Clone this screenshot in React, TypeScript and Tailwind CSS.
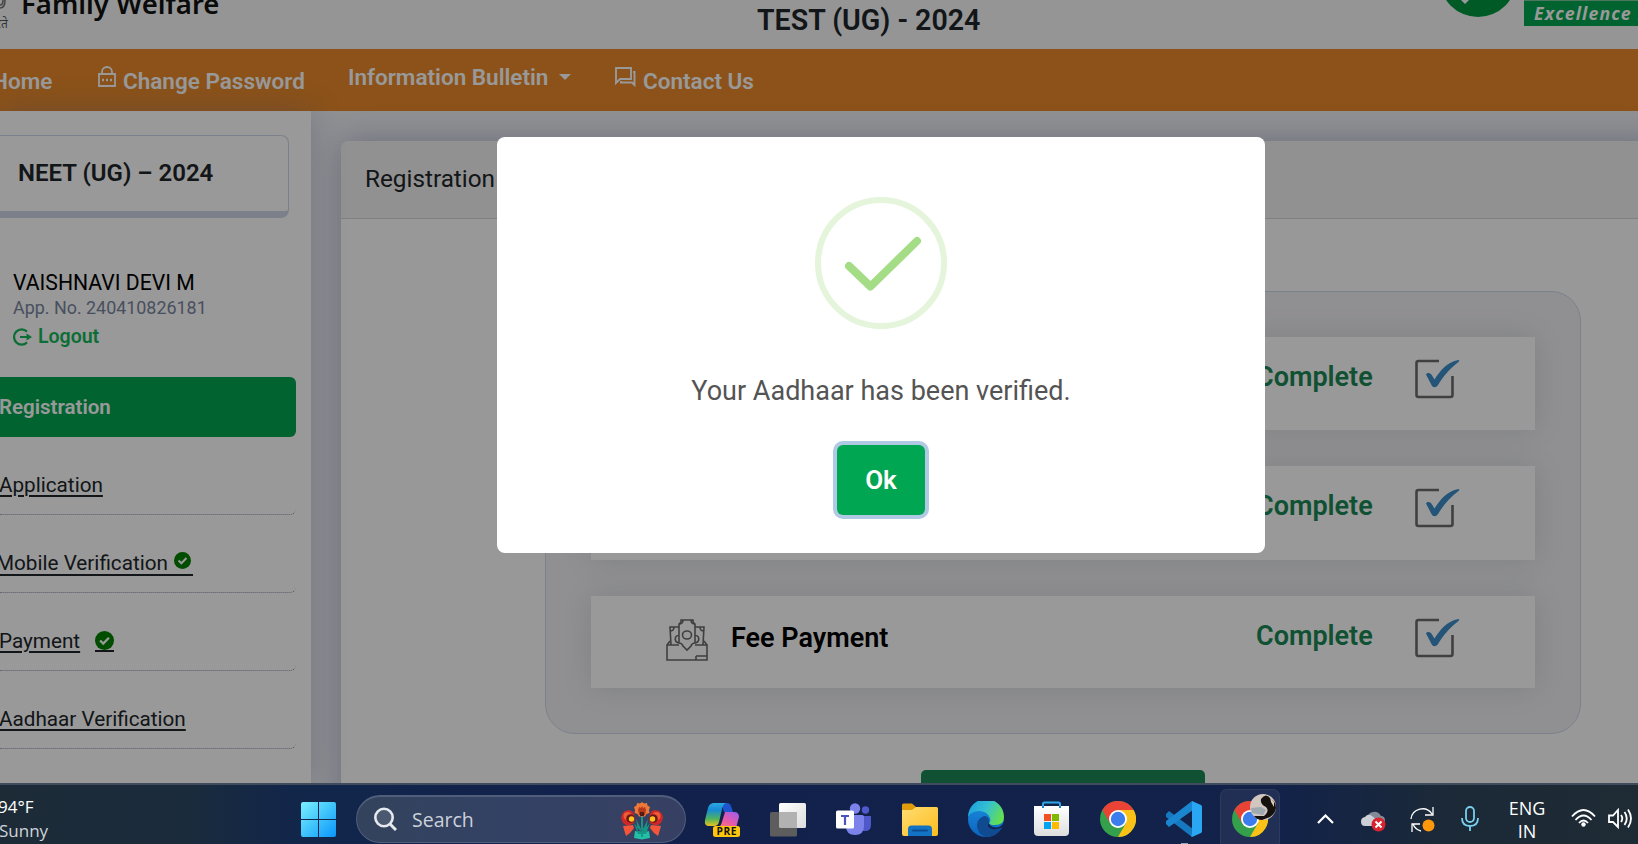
import React from "react";

const roboto = "font-['Roboto','Liberation_Sans',sans-serif]";
const segoe = "font-['Open_Sans','Noto_Sans',sans-serif]";

function Header() {
  return (
    <header className="flex h-[49px] shrink-0 items-start bg-[#f8f9fa]">
      <div className="relative h-full w-[757px] overflow-hidden">
        <svg className="absolute left-0 top-0" width="8" height="12" viewBox="0 0 8 12">
          <path d="M0 8C3 8 5 5 5 0M0 5c2 0 3-2 3-5" stroke="#777" strokeWidth="1.6" fill="none" />
        </svg>
        <span className="absolute left-[-4px] top-[16px] font-['Noto_Sans_Devanagari','Noto_Sans',sans-serif] text-[12px] leading-[18px] text-[#555]">रते</span>
        <span className="absolute left-[21px] top-[-16px] whitespace-nowrap font-['Noto_Sans',sans-serif] text-[27.500px] font-semibold leading-[40px] text-[#111]">Family Welfare</span>
      </div>
      <h1 className="mt-[0px] w-[689px] whitespace-nowrap text-[28.600px] font-semibold leading-[40px] text-[#212529]">TEST (UG) - 2024</h1>
      <svg width="78" height="20" viewBox="0 0 78 20">
        <circle cx="32" cy="-21.5" r="38.5" fill="#009640" />
        <path d="M13-2L19 4L25-2Z" fill="#fff" />
      </svg>
      <div className="flex h-[26px] w-[114px] items-start overflow-hidden border-t border-[#7cc79c] bg-[#00a650] pl-[10px]">
        <span className="whitespace-nowrap font-['Open_Sans',sans-serif] text-[17.700px] font-bold italic leading-[25px] tracking-[1.100px] text-white">Excellence in</span>
      </div>
    </header>
  );
}

function Nav() {
  return (
    <nav className="flex h-[62px] shrink-0 items-start overflow-hidden whitespace-nowrap bg-[#e9892a] text-[22.500px] font-semibold leading-[40px] text-white">
      <span className="ml-[-8px] mt-[12px] w-[106px]">Home</span>
      <svg className="mt-[17px]" width="18" height="22" viewBox="0 0 18 22" fill="none" stroke="#fff" strokeWidth="1.8">
        <path d="M1 8h16v12H1zM4 8V6a5 5 0 0 1 10 0v2" />
        <path d="M4 14h2M8 14h2M12 14h2" strokeWidth="2.4" />
      </svg>
      <span className="ml-[7px] mt-[12px] w-[225px]">Change Password</span>
      <span className="mt-[8px] w-[211px]">Information Bulletin</span>
      <span className="mt-[25px] h-0 w-0 border-x-[6px] border-t-[6px] border-x-transparent border-t-white" />
      <svg className="ml-[44px] mt-[18px]" width="21" height="22" viewBox="0 0 21 22" fill="none" stroke="#fff" strokeWidth="1.9">
        <path d="M1 16V1h15v11H5z" />
        <path d="M18 5h1.500v13l-2.500-2.500H6V14" fill="none" />
      </svg>
      <span className="ml-[7px] mt-[12px]">Contact Us</span>
    </nav>
  );
}

function CheckBadge({ className }: { className: string }) {
  return (
    <svg className={className} viewBox="0 0 18 18">
      <circle cx="9" cy="9" r="9" fill="#008000" />
      <path d="M4.8 9l3 3 5.400-5.600" stroke="#fff" strokeWidth="2.2" fill="none" />
    </svg>
  );
}

const row = "flex h-[78px] items-start whitespace-nowrap rounded-r-[6px] border-b border-dotted border-[#8c94ac] pt-[36px] text-[20.700px] leading-[24px] text-[#212529]";
const link = "underline decoration-[2px] underline-offset-[3px]";

function Sidebar() {
  return (
    <aside className="relative z-10 flex w-[311px] shrink-0 flex-col bg-white pr-[15px] shadow-[0_0_30px_rgba(82,95,150,0.3)]">
      <div className="mt-[24px] flex h-[83px] w-[289px] shrink-0 rounded-r-[8px] border border-b-[7px] border-l-0 border-[#cfd6e6] pl-[18px] pt-[17px]">
        <span className="text-[24px] font-semibold leading-[40px] text-[#212529]">NEET (UG) – 2024</span>
      </div>
      <div className="mt-[53px] flex h-[106px] shrink-0 flex-col whitespace-nowrap pl-[13px]">
        <span className="text-[21.200px] leading-[24px] text-black">VAISHNAVI DEVI M</span>
        <span className="mt-[1px] text-[17.900px] leading-[24px] text-[#7986a0]">App. No. 240410826181</span>
        <span className="mt-[4px] flex items-center text-[19.500px] font-semibold leading-[26px] text-[#14b85a]">
          <svg className="mr-[6px]" width="19" height="18" viewBox="0 0 19 18" fill="none" stroke="#14b85a" strokeWidth="2.2">
            <path d="M14 3.6A7.6 7.6 0 1 0 14 14.4M7 9h8" />
            <path d="M13.5 5.5L19 9l-5.500 3.500z" fill="#14b85a" stroke="none" />
          </svg>
          Logout
        </span>
      </div>
      <div className="flex h-[60px] shrink-0 items-center rounded-r-[6px] bg-[#00a650] pt-[1px] text-[20.500px] font-semibold text-white"><span className="ml-[-1px]">Registration</span></div>
      <div className={row}><a className={link + " ml-[-1px]"}>Application</a></div>
      <div className={row}>
        <span className="ml-[-4px] flex h-[25px] border-b-2 border-[#212529]">Mobile Verification<CheckBadge className="ml-[6px] mr-[2px] mt-[1px] h-[17px] w-[17px]" /></span>
      </div>
      <div className={row}>
        <a className={link + " ml-[-1px]"}>Payment</a>
        <span className="ml-[15px] mt-[2px] border-b-2 border-[#212529]"><CheckBadge className="h-[19px] w-[19px]" /></span>
      </div>
      <div className={row}><a className={link + " ml-[-1px]"}>Aadhaar Verification</a></div>
    </aside>
  );
}

function CheckedBox() {
  return (
    <svg width="45" height="40" viewBox="0 0 45 40" fill="none">
      <path d="M24 2H3.500Q1.500 2 1.500 4v32q0 2 2 2h32q2 0 2-2V17" stroke="#6c6c6c" strokeWidth="2.600" />
      <path d="M11 15.500c2-3 5-1 6 1l2.500 4C25 12 32 3 43.500 1c1 0 1 1 0 2C34 10 28 18 23 26c-2 3-5 3-6.500 0z" fill="#3c8cc8" />
    </svg>
  );
}

function MoneyIcon() {
  return (
    <svg width="42" height="43" viewBox="0 0 42 43" fill="none" stroke="#6a6a6a" strokeWidth="1.600">
      <path d="M1 26h12M29 26h12v15H1V26l3-4M38 22l3 4M30 37h11v4M30 41v-4" />
      <path d="M15 1h12v2l2 2v19q-3 0-4 3l-4 4-4-4q-1-3-4-3V5l2-2zM13 8L4 8l1 18M29 8l9 0-1 18M13 16c-5 1-5 7 0 8M29 16c5 1 5 7 0 8" />
      <ellipse cx="21" cy="16" rx="4.500" ry="4" />
      <path d="M13 5q4 0 4-4M29 5q-4 0-4-4M4 12q4 0 4-4M38 12q-4 0-4-4" />
    </svg>
  );
}

function StepRow({ title, className }: { title?: string; className: string }) {
  return (
    <div className={"flex shrink-0 items-start bg-white pl-[75px] shadow-[0_0_28px_rgba(60,70,90,0.14)] " + className}>
      <div className="mt-[23px] w-[65px]">{title && <MoneyIcon />}</div>
      <span className="mt-[22px] w-[525px] whitespace-nowrap text-[27px] font-semibold leading-[40px] text-black">{title}</span>
      <span className="mt-[20px] w-[159px] text-[27px] font-semibold leading-[40px] text-[#198754]">Complete</span>
      <div className="mt-[22px]"><CheckedBox /></div>
    </div>
  );
}

function MainPanel() {
  return (
    <main className="flex-1 bg-[#f0f1f5] pl-[30px] pt-[30px]">
      <section className="flex h-[760px] w-[1320px] flex-col rounded-[8px] bg-[#fdfdfd] shadow-[0_0_32px_rgba(82,95,150,0.4)]">
        <div className="h-[78px] shrink-0 rounded-t-[8px] border-b border-[#d5d5d7] bg-[#f2f2f2] pl-[24px] pt-[18px] text-[24.300px] leading-[40px] text-[#212529]">Registration</div>
        <div className="ml-[204px] mt-[72px] flex h-[443px] w-[1036px] shrink-0 flex-col rounded-[30px] border border-[#cfd7e8] bg-[#f0f0f3] pl-[45px] pr-[45px] pt-[45px]">
          <StepRow className="h-[93px]" />
          <StepRow className="mt-[36px] h-[94px]" />
          <StepRow title="Fee Payment" className="mt-[36px] h-[92px]" />
        </div>
        <div className="ml-[580px] mt-[36px] h-[60px] w-[284px] shrink-0 rounded-[5px] bg-[#198754]" />
      </section>
    </main>
  );
}

function Modal() {
  return (
    <div className="absolute left-[497px] top-[137px] z-30 flex h-[416px] w-[768px] flex-col items-center rounded-[8px] bg-white pt-[60px]">
      <svg width="132" height="132" viewBox="0 0 132 132" fill="none">
        <circle cx="66" cy="66" r="63" stroke="#e4f5db" strokeWidth="6" />
        <path d="M34 69L55.500 89.500L102 44" stroke="#a5dc86" strokeWidth="8" strokeLinecap="round" strokeLinejoin="round" />
      </svg>
      <p className="mt-[42px] whitespace-nowrap text-[27px] leading-[40px] text-[#545454]">Your Aadhaar has been verified.</p>
      <button className="mt-[34px] h-[70px] w-[88px] rounded-[6px] bg-[#00a651] text-[26px] font-semibold text-white shadow-[0_0_0_4px_#b0c9e4]">Ok</button>
    </div>
  );
}

function ChromeLogo() {
  return (
    <svg width="36" height="36" viewBox="0 0 36 36">
      <circle cx="18" cy="18" r="18" fill="#34a04c" />
      <path d="M2.400 9A18 18 0 0 1 33.600 9H18L10.200 22.500z" fill="#ea4335" />
      <path d="M33.600 9A18 18 0 0 1 18 36L25.800 22.500 18 9z" fill="#fbc116" />
      <circle cx="18" cy="18" r="9" fill="#fff" />
      <circle cx="18" cy="18" r="7.200" fill="#3b7ded" />
    </svg>
  );
}

function Flowers() {
  return (
    <svg width="42" height="38" viewBox="0 0 42 38">
      <path d="M13 36l1-7 7 2 7-2 1 7-8 1.500z" fill="#22bfa6" />
      <path d="M20 13h2v22h-2zM21 29l-6-12 2 12zM21 29l6-12-2 12zM13 21l8 10 8-10-4 11h-8z" fill="#169684" />
      <path d="M21 0l2 1.500 3-.500.500 2.500L29 5l-1 3 .500 3-3 1-1.500 2.500h-6L16.500 12l-3-1 .500-3-1-3 2.500-1.500L16 1l3 .500z" fill="#ee7838" />
      <path d="M17 8l1-3 2 1 1-2 1 2 2-1 1 3-1 5h-6z" fill="#b5381c" /><path d="M19 10h4v4h-4z" fill="#541b15" />
      <path d="M8 8l3 1 2 3 1 5-1 4-4 2H5l-3-2-2-5 1-4 3-3z" fill="#cf2727" />
      <path d="M34 8l-3 1-2 3-1 5 1 4 4 2h4l3-2 2-5-1-4-3-3z" fill="#cf2727" />
      <circle cx="6.500" cy="14" r="4" fill="#ef5a38" /><circle cx="35.500" cy="14" r="4" fill="#ef5a38" />
      <circle cx="9.500" cy="16.500" r="4.200" fill="#6d1618" /><circle cx="32.500" cy="16.500" r="4.200" fill="#6d1618" />
      <circle cx="10.500" cy="17" r="2.700" fill="#fdc31c" /><circle cx="31.500" cy="17" r="2.700" fill="#fdc31c" />
      <path d="M2 24l10-1 1 3-4 5-4 3-1-3zM40 24l-10-1-1 3 4 5 4 3 1-3z" fill="#f3553a" />
    </svg>
  );
}

function Copilot() {
  return (
    <svg width="36" height="36" viewBox="0 0 36 36">
      <defs>
        <linearGradient id="cpA" x1="0" y1="0" x2="0" y2="1"><stop offset="0" stopColor="#2da8e0" /><stop offset=".3" stopColor="#168bd6" /><stop offset=".7" stopColor="#52b45a" /><stop offset="1" stopColor="#f0c21c" /></linearGradient>
        <linearGradient id="cpB" x1="1" y1="0" x2="0" y2="1"><stop offset="0" stopColor="#9b5cf0" /><stop offset=".5" stopColor="#e85aa8" /><stop offset="1" stopColor="#ff8a50" /></linearGradient>
      </defs>
      <path d="M17 1h6q3 0 4 3l2 6h-9z" fill="#1d55cf" />
      <path d="M21 10h9q5 0 5 5l-3 11H8l7-1q2-1 3-5z" fill="url(#cpB)" />
      <path d="M9 1h13q-3 1-4 6l-3 13q-1 4-5 4H5Q0 24 1 18L4 6q1-4 5-5z" fill="url(#cpA)" />
      <rect x="9" y="24" width="27" height="11" rx="2.500" fill="#ffc60b" />
      <text x="22.700" y="33.200" textAnchor="middle" fontSize="10.200" fontWeight="700" letterSpacing=".5" fontFamily="Open Sans" fill="#111">PRE</text>
    </svg>
  );
}

function TaskView() {
  return (
    <svg width="36" height="36" viewBox="0 0 36 36">
      <defs><linearGradient id="tv" x1="0" y1="0" x2="1" y2="1"><stop offset="0" stopColor="#fff" /><stop offset="1" stopColor="#dcdcdc" /></linearGradient></defs>
      <rect x="9" y="1" width="27" height="25" rx="1.500" fill="url(#tv)" />
      <rect x="0" y="10" width="27" height="24.500" rx="1.500" fill="#5d5d5d" />
      <path d="M9 10h18v16H10.500Q9 26 9 24.500z" fill="#b2b2b2" />
    </svg>
  );
}

function Teams() {
  return (
    <svg width="36" height="36" viewBox="0 0 36 36">
      <circle cx="29.500" cy="8" r="3.700" fill="#5059c9" />
      <path d="M24 14h11v9q0 6-6 6-4 0-5-2z" fill="#5059c9" />
      <circle cx="19" cy="6.500" r="5.200" fill="#7b83eb" />
      <path d="M10 13h16q2 0 2 2v9q0 9-9 9t-9-9z" fill="#7b83eb" />
      <rect x="0" y="8.500" width="18" height="18" rx="1.500" fill="#fff" />
      <path d="M5 14h8M9 14v9" stroke="#4b53bc" strokeWidth="2.200" />
    </svg>
  );
}

function Explorer() {
  return (
    <svg width="36" height="36" viewBox="0 0 36 36">
      <defs><linearGradient id="fo" x1="0" y1="0" x2="1" y2="1"><stop offset="0" stopColor="#ffdc73" /><stop offset="1" stopColor="#fdbe1d" /></linearGradient></defs>
      <path d="M0 8V3q0-1.500 1.500-1.500H10L14 5v5H0z" fill="#e09c0b" />
      <path d="M0 8h10l4-3h20.500Q36 5 36 6.500V32q0 2-2 2H2q-2 0-2-2z" fill="url(#fo)" />
      <path d="M6 34v-7q0-3.500 3.500-3.500h17Q30 23.500 30 27v7z" fill="#1273c4" />
      <path d="M11 28.500h14" stroke="#0b4d94" strokeWidth="1.800" strokeLinecap="round" />
    </svg>
  );
}

function Edge() {
  return (
    <svg width="36" height="36" viewBox="0 0 36 36">
      <defs>
        <linearGradient id="eg" x1="0" y1=".2" x2="1" y2=".6"><stop offset="0" stopColor="#1b9de0" /><stop offset=".5" stopColor="#35c1d0" /><stop offset="1" stopColor="#66e04c" /></linearGradient>
        <linearGradient id="eb" x1="0" y1="0" x2="0" y2="1"><stop offset="0" stopColor="#1a8ee0" /><stop offset="1" stopColor="#0c63bd" /></linearGradient>
      </defs>
      <circle cx="18" cy="18" r="18" fill="url(#eb)" />
      <path d="M34 27Q28 36 18 36 9 33 9 24q0-6 7-9 4 0 5 4-1 8 13 8z" fill="#104a91" />
      <path d="M0 16A18 18 0 0 1 36 16q0 8-9 8-6 0-6-2 2-1 1-5Q19 10 11 10 3 10 0 16z" fill="url(#eg)" />
      <path d="M36 20q-1 4-5 6-9 2-10-4-1 2-1 3 3 5 13 2l2-1-1 3 2 0z" fill="#13224c" />
    </svg>
  );
}

function Store() {
  return (
    <svg width="36" height="36" viewBox="0 0 36 36">
      <defs><linearGradient id="st" x1="0" y1="0" x2="0" y2="1"><stop offset="0" stopColor="#fff" /><stop offset="1" stopColor="#dedede" /></linearGradient></defs>
      <path d="M9 7V3q0-1.500 1.500-1.500h14Q26 1.500 26 3v4" stroke="#2fa9e6" strokeWidth="2" fill="none" />
      <path d="M0 5h35v26q0 4-4 4H4q-4 0-4-4z" fill="url(#st)" />
      <path d="M9 5V3M26 5V3" stroke="#2fa9e6" strokeWidth="2" /><path d="M9 5v2M26 5v2" stroke="#2383c4" strokeWidth="2" />
      <path d="M10 13h7v7h-7z" fill="#f25022" /><path d="M18 13h7v7h-7z" fill="#7fba00" />
      <path d="M10 21h7v7h-7z" fill="#00a4ef" /><path d="M18 21h7v7h-7z" fill="#ffb900" />
    </svg>
  );
}

function VsCode() {
  return (
    <svg width="36" height="36" viewBox="0 0 36 36">
      <path d="M0 13l3-3 24 18-1 8L0 16q-1-1 0-3z" fill="#1679c0" />
      <path d="M0 23l3 3L27 9l-1-9L0 20q-1 1 0 3z" fill="#1a86cf" />
      <path d="M26 0l9 4q1 .5 1 2v24q0 1.500-1 2l-9 4q-1-.5 0-4V4q0-3 0-4z" fill="#2aa7f3" />
    </svg>
  );
}

function Tray() {
  return (
    <div className="flex items-start">
      <svg className="mt-[29px]" width="17" height="10" viewBox="0 0 17 10" fill="none" stroke="#fff" strokeWidth="2.200"><path d="M1 9l7.500-7.500L16 9" /></svg>
      <svg className="ml-[27px] mt-[25px]" width="25" height="22" viewBox="0 0 25 22">
        <path d="M7 9q-1-6 5-7 5-1 8 4 4 0 4 5l-8 6z" fill="#848b98" />
        <path d="M4 16q-4 0-4-4.500 0-4 4-4.500 3-4 7-1l6 5-2 5z" fill="#cdd1d7" />
        <circle cx="17.500" cy="14.500" r="7" fill="#d9232e" />
        <path d="M14.500 11.500l6 6M20.500 11.500l-6 6" stroke="#fff" strokeWidth="2" />
      </svg>
      <svg className="ml-[24px] mt-[21px]" width="26" height="27" viewBox="0 0 26 27" fill="none" stroke="#fff" strokeWidth="1.300">
        <path d="M1 13A11.500 11.500 0 0 1 22 8M23 1v8h-8M11 25A11.500 11.500 0 0 1 3 18M2 26v-8h8" />
        <circle cx="18.500" cy="19.500" r="6" fill="#ff980b" stroke="none" />
      </svg>
      <svg className="ml-[25px] mt-[21px]" width="18" height="25" viewBox="0 0 18 25" fill="none" stroke="#78cfee" strokeWidth="1.800">
        <rect x="5" y="1" width="8" height="15" rx="4" /><path d="M1 12q0 8 8 8t8-8M9 20v5" />
      </svg>
      <div className="ml-[25px] mt-[12px] w-[46px] text-center text-[18px] leading-[23px] text-white"><div>ENG</div><div>IN</div></div>
      <svg className="ml-[21px] mt-[24px]" width="25" height="18" viewBox="0 0 25 18" fill="none" stroke="#fff" strokeWidth="1.800">
        <path d="M1 7.500q11.500-13 23 0M4.500 11q8-9 16 0M8 14q4.500-5 9 0" /><circle cx="12.500" cy="15.500" r="2.200" fill="#fff" stroke="none" />
      </svg>
      <svg className="ml-[12px] mt-[23px]" width="26" height="22" viewBox="0 0 26 22" fill="none" stroke="#fff" strokeWidth="1.800">
        <path d="M1 7.500h4L10 2v17l-5-5H1zM13 7q2.500 3.500 0 7M16.500 4q4.500 6.500 0 13M20 1.500q6 9 0 18" />
      </svg>
    </div>
  );
}

function Taskbar() {
  return (
    <footer className={"relative flex h-[61px] shrink-0 items-start overflow-hidden border-t-2 border-[#404b5e] bg-[linear-gradient(90deg,#1d2b37_0px,#1a2b3c_190px,#12264a_290px,#11214c_600px,#122249_1280px,#1b2938_1440px,#1f2b34_1638px)] " + segoe}>
      <div className="w-[301px] shrink-0 pt-[10px] text-[17px] leading-[24px] text-white"><div className="ml-[-2px]">94°F</div><div className="ml-[-1px] text-[#cfd4da]">Sunny</div></div>
      <svg className="mt-[17px] shrink-0" width="35" height="35" viewBox="0 0 35 35">
        <defs><linearGradient id="wn" gradientUnits="userSpaceOnUse" x1="0" y1="0" x2="35" y2="35"><stop offset="0" stopColor="#7cf0ff" /><stop offset=".5" stopColor="#40c4fb" /><stop offset="1" stopColor="#0a96fb" /></linearGradient></defs>
        <path d="M2 0h15v17H0V2q0-2 2-2zM18 0h15q2 0 2 2v15H18zM0 18h17v17H2q-2 0-2-2zM18 18h17v15q0 2-2 2H18z" fill="url(#wn)" />
      </svg>
      <div className="ml-[20px] mt-[10px] flex h-[48px] w-[330px] shrink-0 items-start rounded-full border border-t-2 border-[#505d7b] bg-[linear-gradient(90deg,#33435c,#334165_50%,#374062)] pl-[17px]">
        <svg className="mt-[10px]" width="23" height="24" viewBox="0 0 23 24" fill="none" stroke="#e6e9ee" strokeWidth="2.600"><circle cx="10" cy="10.500" r="8.700" fill="#4a5870" /><path d="M16 17l6 6" strokeWidth="3" /></svg>
        <span className="ml-[15px] mt-[10px] w-[209px] text-[19.500px] leading-[26px] text-[#ccd1da]">Search</span>
        <div className="mt-[5px]"><Flowers /></div>
      </div>
      <div className="ml-[18px] mt-[17px] flex shrink-0 gap-[30px]"><Copilot /><TaskView /><Teams /><Explorer /></div>
      <div className="ml-[30px] mt-[16px] flex shrink-0 gap-[30px]"><Edge /><Store /><ChromeLogo /><VsCode /></div>
      <div className="relative ml-[18px] mt-[4px] h-[57px] w-[60px] shrink-0 rounded-t-[7px] border border-b-0 border-[#2d3b5a] bg-[#212f54] pl-[11px] pt-[11px]">
        <ChromeLogo />
        <svg className="absolute left-[29px] top-[4px]" width="26" height="26" viewBox="0 0 26 26">
          <circle cx="13" cy="13" r="13" fill="#d2c6c0" />
          <path d="M11 5q5-7 10 0 5 3 5 9-1 6-6 9l-8 3q-5 0-8-4l10 0q6-5 2-9-6-3-5-8z" fill="#15110f" />
          <path d="M1 14l10-1 5 3-3 5-11-2z" fill="#9fa9b0" />
          <path d="M20 3l4 5 0 5-3-5z" fill="#e0c8b8" />
        </svg>
        <span className="absolute bottom-0 left-[18px] h-[3px] w-[22px] translate-y-[1px] rounded-t-full bg-[#4cc2ff]" />
      </div>
      <span className="absolute bottom-0 left-[1181px] h-[1px] w-[7px] bg-[#9aa3b2]" />
      <div className="ml-[37px] shrink-0"><Tray /></div>
    </footer>
  );
}

export default function App() {
  return (
    <div className={"relative flex h-[844px] w-[1638px] flex-col overflow-hidden bg-white " + roboto}>
      <div className="relative flex h-[783px] shrink-0 flex-col overflow-hidden">
        <Header />
        <Nav />
        <div className="flex min-h-0 flex-1">
          <Sidebar />
          <MainPanel />
        </div>
        <div className="absolute inset-0 z-20 bg-black/40" />
        <Modal />
      </div>
      <Taskbar />
    </div>
  );
}
